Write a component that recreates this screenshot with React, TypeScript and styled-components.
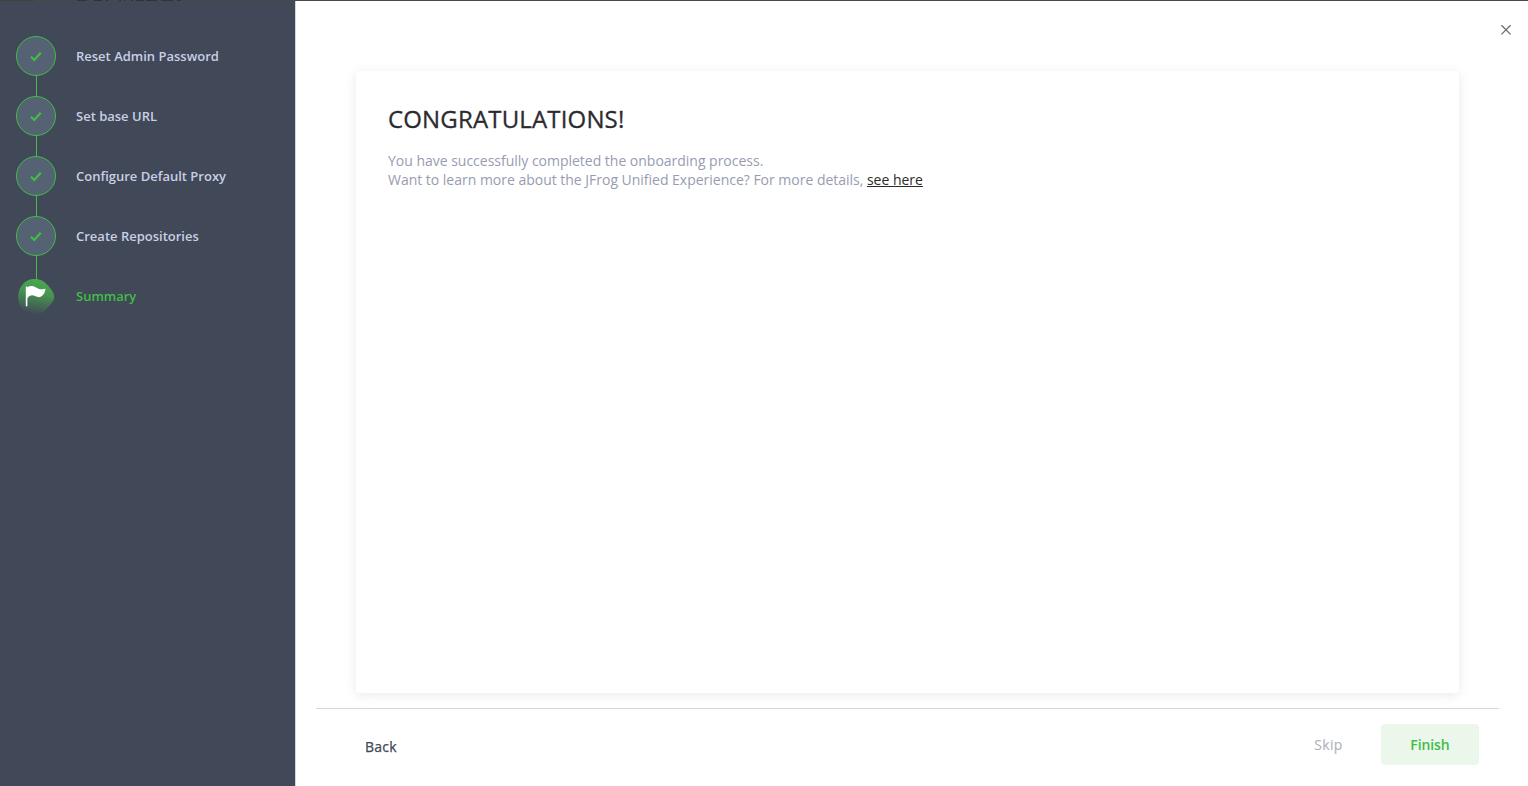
import React from 'react';
import styled, { createGlobalStyle } from 'styled-components';

const GlobalStyle = createGlobalStyle`
  *, *::before, *::after { box-sizing: border-box; }
  body {
    margin: 0;
    background: #fff;
    font-family: 'Open Sans', 'Noto Sans', sans-serif;
    font-size: 14px;
  }
`;

const Page = styled.div`
  display: flex;
  flex-direction: column;
  width: 100%;
  height: 100vh;
  overflow: hidden;
`;

/* Sliver of the dimmed page behind the wizard: [start, end] of its dark marks. */
const edgeMarks = [
  [77, 87], [94, 102], [106, 108], [119, 121], [124, 125],
  [131, 133], [136, 144], [146, 157], [161, 173], [177, 181],
];
const edgeStops = edgeMarks
  .map(([a, b]) => `#484848 ${a}px, #333 ${a}px, #333 ${b}px, #484848 ${b}px`)
  .join(', ');

const TopEdge = styled.div`
  flex: none;
  height: 1px;
  background: linear-gradient(to right, #3a4636 34px, #484848 34px, ${edgeStops});
`;

const Wizard = styled.div`
  flex: 1;
  display: flex;
  min-height: 0;
`;

const Sidebar = styled.aside`
  flex: none;
  width: 296px;
  padding: 35px 16px;
  background: #414857;
  border-right: 1px solid #d5d6d9;
`;

const StepList = styled.ol`
  list-style: none;
  margin: 0;
  padding: 0;
`;

const Step = styled.li`
  display: flex;
  height: 60px;
`;

const Marker = styled.div`
  flex: none;
  display: flex;
  flex-direction: column;
  align-items: center;
  width: 40px;
  margin-right: 20px;
`;

const Circle = styled.div`
  flex: none;
  display: flex;
  align-items: center;
  justify-content: center;
  width: 40px;
  height: 40px;
  border: 1px solid #40be46;
  border-radius: 50%;
  background: #556274;
`;

const Connector = styled.div<{ $long?: boolean }>`
  flex: none;
  width: 1px;
  height: ${(p) => (p.$long ? 24 : 20)}px;
  margin-left: 1px;
  background: #40be46;
`;

const StepLabel = styled.span<{ $active?: boolean }>`
  height: 40px;
  line-height: 40px;
  font-size: 13px;
  font-weight: 600;
  color: ${(p) => (p.$active ? '#40be46' : '#c8cfe6')};
`;

const Main = styled.main`
  flex: 1;
  display: flex;
  flex-direction: column;
  min-width: 0;
`;

const Header = styled.header`
  flex: none;
  display: flex;
  justify-content: flex-end;
  height: 70px;
  padding: 24px 17px 0 0;
`;

const CloseButton = styled.button`
  display: block;
  width: 10px;
  height: 10px;
  padding: 0;
  border: 0;
  background: none;

  svg { display: block; }
`;

const Card = styled.section`
  flex: 1;
  margin: 0 69px 15px 60px;
  padding: 31px 32px 32px;
  border-radius: 3px;
  background: #fff;
  box-shadow: 0 2px 12px rgba(0, 0, 0, 0.09);
`;

const Title = styled.h1`
  margin: 0;
  font-size: 24px;
  font-weight: 400;
  line-height: 33px;
  letter-spacing: 0.16px;
  -webkit-text-stroke: 0.3px currentColor;
  color: #2b2b2f;
`;

const Message = styled.p`
  margin: 16px 0 0;
  font-size: 14px;
  line-height: 19px;
  letter-spacing: -0.015px;
  color: #979cb2;
`;

const Link = styled.a`
  color: #2b2b2b;
  text-decoration: underline;
`;

const Footer = styled.footer`
  flex: none;
  display: flex;
  align-items: flex-start;
  height: 78px;
  margin: 0 29px 0 20px;
  padding: 15px 20px 0 49px;
  border-top: 1px solid #d8d8d8;
`;

const Button = styled.button`
  height: 41px;
  padding: 0;
  border: 0;
  border-radius: 4px;
  font: 400 14px 'Open Sans', sans-serif;
  letter-spacing: 0.25px;
  background: transparent;
`;

const BackButton = styled(Button)`
  margin: 2px auto 0 0;
  -webkit-text-stroke: 0.25px currentColor;
  color: #414857;
`;

const SkipButton = styled(Button)`
  margin-right: 38.5px;
  -webkit-text-stroke: 0.12px currentColor;
  color: #b0b4bc;
`;

const FinishButton = styled(Button)`
  width: 98px;
  font-weight: 600;
  letter-spacing: -0.1px;
  background: #ebf7eb;
  color: #40be46;
`;

const CheckIcon = () => (
  <svg width="12" height="12" viewBox="0 0 12 12" fill="none" stroke="#40be46" strokeWidth="2.2">
    <path d="M1 6.8 L4.3 10 L10.7 2.7" />
  </svg>
);

const FlagIcon = () => (
  <svg width="40" height="40" viewBox="0 0 40 40">
    <defs>
      <linearGradient id="blob" x1="0.6" y1="0" x2="0.4" y2="1">
        <stop offset="0" stopColor="#49a950" />
        <stop offset="0.4" stopColor="#469450" />
        <stop offset="1" stopColor="#414857" />
      </linearGradient>
    </defs>
    <path
      d="M17 3 C24 2.4 28 5 32.5 10 C35.5 13.5 38.2 17 38.2 21 C38.2 25 34 29 31 32.5 C28 36 25 38.5 20 38.3 C12 38 4.5 33 2.6 26 C0.6 17 5 4.2 17 3 Z"
      fill="url(#blob)"
    />
    <path
      d="M9.8 10.4 H11.2 V11.3 C14 9.6 17 9.6 20 11.4 C23 13.2 26 13.8 29.6 12.8 C29 16.4 27.4 20 24 21 C21 21.8 18.3 18.8 15 19.4 C13 19.8 11.8 21 11.4 22.6 V30.3 H9.8 Z"
      fill="#fff"
    />
  </svg>
);

const CloseIcon = () => (
  <svg width="10" height="10" viewBox="0 0 10 10" stroke="#666" strokeWidth="1.2">
    <path d="M0.4 0.2 L9.6 9.4 M9.6 0.2 L0.4 9.4" />
  </svg>
);

const completed = ['Reset Admin Password', 'Set base URL', 'Configure Default Proxy', 'Create Repositories'];

export default function App() {
  return (
    <>
      <GlobalStyle />
      <Page>
        <TopEdge />
        <Wizard>
          <Sidebar>
            <StepList>
              {completed.map((label, i) => (
                <Step key={label}>
                  <Marker>
                    <Circle>
                      <CheckIcon />
                    </Circle>
                    <Connector $long={i === completed.length - 1} />
                  </Marker>
                  <StepLabel>{label}</StepLabel>
                </Step>
              ))}
              <Step>
                <Marker>
                  <FlagIcon />
                </Marker>
                <StepLabel $active>Summary</StepLabel>
              </Step>
            </StepList>
          </Sidebar>
          <Main>
            <Header>
              <CloseButton aria-label="Close">
                <CloseIcon />
              </CloseButton>
            </Header>
            <Card>
              <Title>CONGRATULATIONS!</Title>
              <Message>
                You have successfully completed the onboarding process.
                <br />
                Want to learn more about the JFrog Unified Experience? For more details, <Link href="#">see here</Link>
              </Message>
            </Card>
            <Footer>
              <BackButton>Back</BackButton>
              <SkipButton>Skip</SkipButton>
              <FinishButton>Finish</FinishButton>
            </Footer>
          </Main>
        </Wizard>
      </Page>
    </>
  );
}
